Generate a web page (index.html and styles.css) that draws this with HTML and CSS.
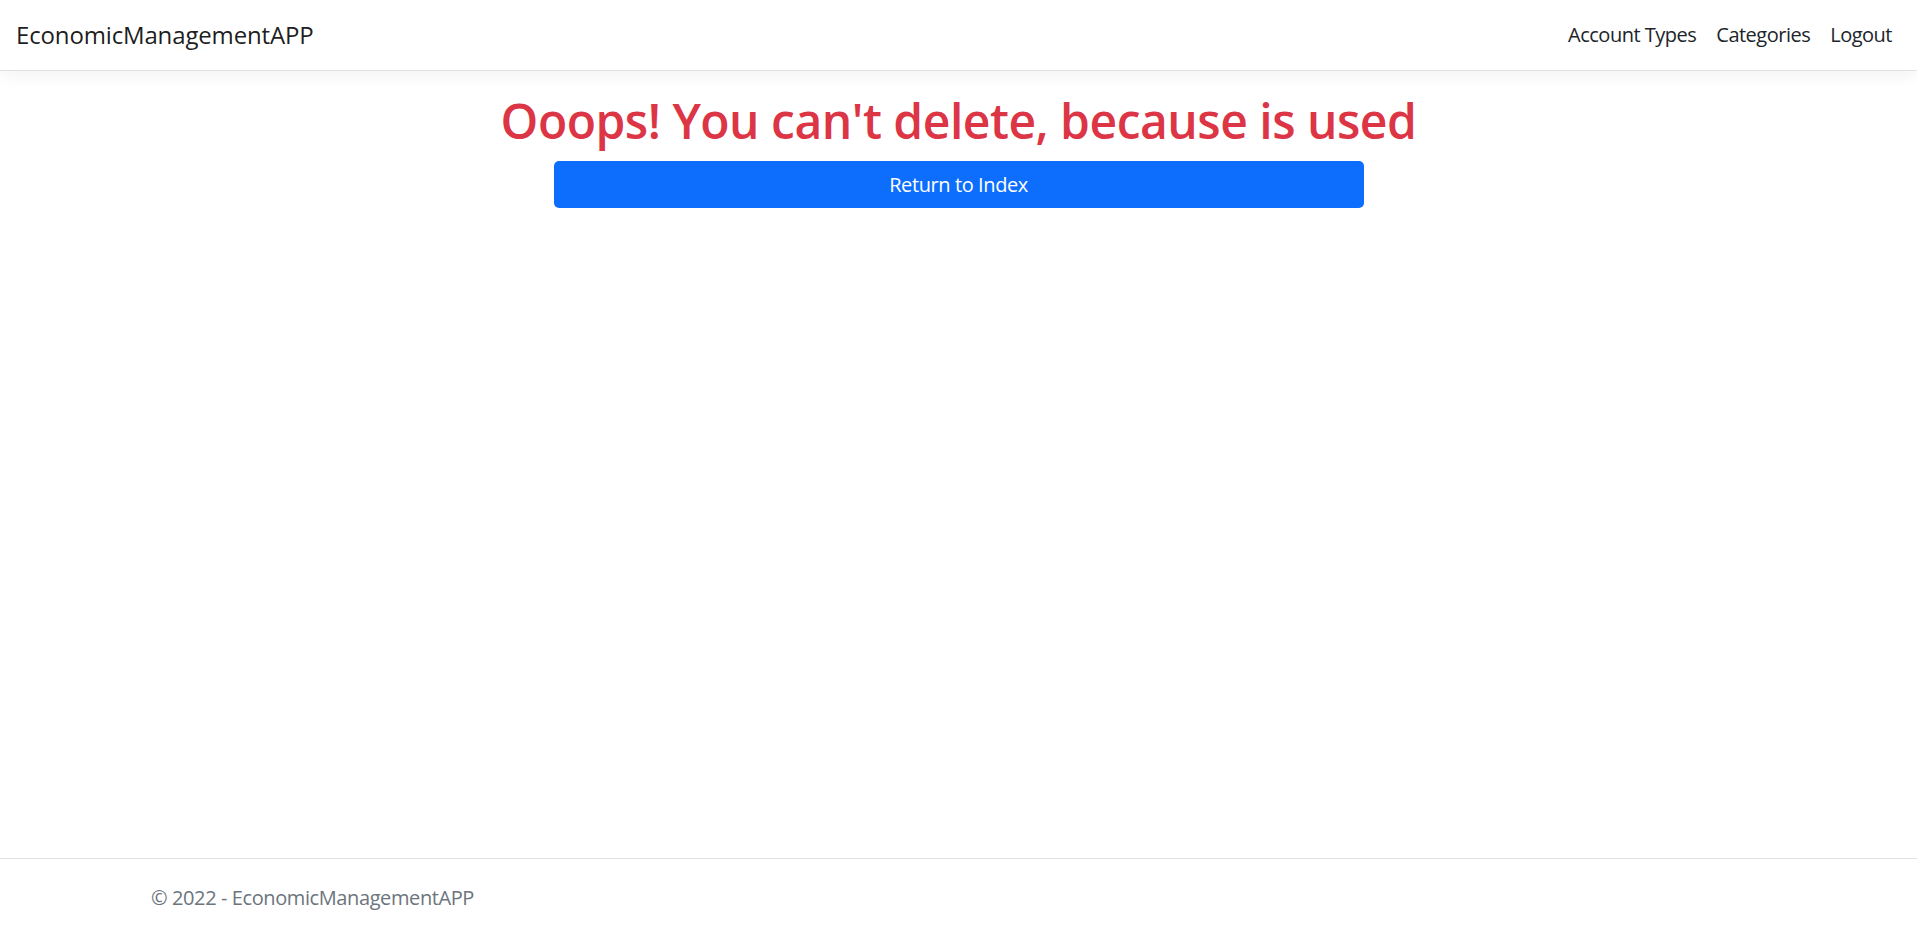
FILE: index.html
```html
<!DOCTYPE html>
<html lang="en">
<head>
<meta charset="utf-8">
<title>EconomicManagementAPP</title>
<link rel="stylesheet" href="styles.css">
</head>
<body>
<header class="header">
  <nav class="navbar">
    <a class="brand" href="#">EconomicManagementAPP</a>
    <ul class="nav">
      <li><a class="nav-link" href="#">Account Types</a></li>
      <li><a class="nav-link" href="#">Categories</a></li>
      <li><a class="nav-link" href="#">Logout</a></li>
    </ul>
  </nav>
</header>
<main class="main">
  <h1 class="title">Ooops! You can't delete, because is used</h1>
  <a class="btn" href="#">Return to Index</a>
</main>
<footer class="footer">
  <div class="footer-inner">&copy; 2022 - EconomicManagementAPP</div>
</footer>
</body>
</html>
```

FILE: styles.css
```css
* { box-sizing: border-box; }
html, body { margin: 0; padding: 0; }
body {
  font-family: "Open Sans", "Noto Sans", sans-serif;
  font-size: 20px;
  color: #212529;
  background: #fff;
  min-height: 100vh;
  display: flex;
  flex-direction: column;
}
a { text-decoration: none; }
.header {
  margin-bottom: 20px;
}
.navbar {
  height: 71px;
  display: flex;
  align-items: center;
  justify-content: space-between;
  padding: 0 15px 0 16px;
  border-bottom: 1px solid #dee2e6;
  box-shadow: 0 5px 15px rgba(0, 0, 0, 0.05);
  background: #fff;
}
.brand {
  font-size: 24px;
  color: rgba(0, 0, 0, 0.9);
  letter-spacing: -0.15px;
  margin-top: -2px;
}
.nav {
  list-style: none;
  margin: 0;
  padding: 0;
  display: flex;
}
.nav-link {
  display: block;
  padding: 10px;
  color: #212529;
  font-size: 20px;
  letter-spacing: -0.5px;
  margin-top: -2px;
}
.main {
  display: flex;
  flex-direction: column;
  align-items: center;
}
.title {
  margin: 0 0 10px;
  font-size: 48px;
  font-weight: 600;
  line-height: 60px;
  letter-spacing: -0.5px;
  color: #dc3545;
}
.btn {
  display: block;
  width: 810px;
  height: 47px;
  line-height: 47px;
  text-align: center;
  background: #0d6efd;
  color: #fff;
  border-radius: 5px;
  font-size: 20px;
  letter-spacing: -0.4px;
}
.footer {
  margin-top: auto;
  height: 68px;
  border-top: 1px solid #dee2e6;
}
.footer-inner {
  padding-left: 151px;
  line-height: 78px;
  color: #6c757d;
  font-size: 20px;
  letter-spacing: -0.4px;
  white-space: nowrap;
}
```
